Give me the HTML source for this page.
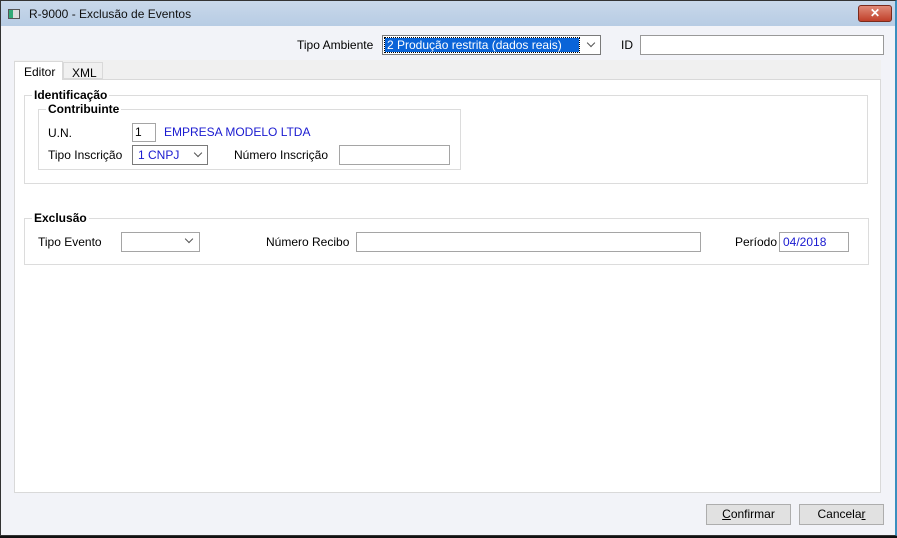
<!DOCTYPE html><html><head><style>
*{margin:0;padding:0;box-sizing:border-box}
body{width:897px;height:538px;overflow:hidden;background:#fff;font-family:"Liberation Sans",sans-serif;font-size:12px;color:#000;position:relative}
.a{position:absolute}
.win{left:0;top:0;width:897px;height:536px;background:#f2f3f8;border:1px solid #333;border-right:2px solid #3a8fbf}
.title{left:1px;top:1px;width:894px;height:25px;background:linear-gradient(#c9d8ea,#b7cce4)}
.inp{position:absolute;background:#fff;border:1px solid #a5a5a5;height:20px}
.txt{position:absolute;white-space:nowrap}
.blue{color:#1a1ad0}
.chev{position:absolute;width:6px;height:6px;border-right:1px solid #555;border-bottom:1px solid #555;transform:rotate(45deg)}
.grp{position:absolute;border:1px solid #dcdcdc}
.leg{position:absolute;background:#fff;font-weight:bold;font-size:12px;padding:0 2px}
.btn{position:absolute;background:#e1e1e1;border:1px solid #adadad;height:21px;text-align:center;line-height:19px}
</style></head><body>
<div class="a" style="left:0;top:534px;width:897px;height:4px;background:#111"></div>
<div class="a win"></div>
<div class="a title"></div>
<div class="a" style="left:8px;top:9px;width:12px;height:10px;border:1px solid #555;background:linear-gradient(90deg,#3a7 0 40%,#ddd 40%)"></div>
<div class="txt" style="left:29px;top:7px;font-size:12px;color:#111">R-9000 - Exclusão de Eventos</div>
<div class="a" style="left:858px;top:5px;width:34px;height:17px;background:linear-gradient(#e08a78,#c0402a);border:1px solid #7a2a1c;border-radius:3px;color:#fff;text-align:center;font-weight:bold;line-height:15px">✕</div>
<div class="txt" style="left:297px;top:38px">Tipo Ambiente</div>
<div class="inp" style="left:382px;top:35px;width:219px;border-color:#7a7a7a"></div>
<div class="a" style="left:385px;top:38px;width:194px;height:14px;background:#0a64d8;color:#fff;line-height:14px;padding-left:2px;outline:1px dotted #000">2 Produção restrita (dados reais)</div>
<div class="chev" style="left:588px;top:40px"></div>
<div class="txt" style="left:621px;top:38px">ID</div>
<div class="inp" style="left:640px;top:35px;width:244px;border-color:#999"></div>
<div class="a" style="left:14px;top:60px;width:867px;height:20px;background:#f0f0f0;border-bottom:1px solid #ddd"></div>
<div class="a" style="left:14px;top:61px;width:49px;height:19px;background:#fff;border:1px solid #d9d9d9;border-bottom:none;z-index:2"></div>
<div class="txt" style="left:24px;top:65px;z-index:3">Editor</div>
<div class="a" style="left:63px;top:62px;width:40px;height:17px;border:1px solid #d9d9d9;background:#f0f0f0"></div>
<div class="txt" style="left:72px;top:66px">XML</div>
<div class="a" style="left:14px;top:79px;width:867px;height:414px;background:#fff;border:1px solid #d9d9d9"></div>
<div class="grp" style="left:24px;top:95px;width:844px;height:89px"></div>
<div class="leg" style="left:32px;top:88px">Identificação</div>
<div class="grp" style="left:38px;top:109px;width:423px;height:61px"></div>
<div class="leg" style="left:46px;top:102px">Contribuinte</div>
<div class="txt" style="left:48px;top:126px">U.N.</div>
<div class="inp" style="left:132px;top:123px;width:24px;height:19px;padding-left:2px;line-height:17px">1</div>
<div class="txt blue" style="left:164px;top:125px">EMPRESA MODELO LTDA</div>
<div class="txt" style="left:48px;top:148px">Tipo Inscrição</div>
<div class="inp" style="left:132px;top:145px;width:76px;border-color:#7a7a7a;padding-left:5px;line-height:18px" ><span class="blue">1 CNPJ</span></div>
<div class="chev" style="left:195px;top:150px"></div>
<div class="txt" style="left:234px;top:148px">Número Inscrição</div>
<div class="inp" style="left:339px;top:145px;width:111px"></div>
<div class="grp" style="left:24px;top:218px;width:845px;height:47px"></div>
<div class="leg" style="left:32px;top:211px">Exclusão</div>
<div class="txt" style="left:38px;top:235px">Tipo Evento</div>
<div class="inp" style="left:121px;top:232px;width:79px"></div>
<div class="chev" style="left:186px;top:236px"></div>
<div class="txt" style="left:266px;top:235px">Número Recibo</div>
<div class="inp" style="left:356px;top:232px;width:345px"></div>
<div class="txt" style="left:735px;top:235px">Período</div>
<div class="inp" style="left:779px;top:232px;width:70px;padding-left:3px;line-height:18px"><span class="blue">04/2018</span></div>
<div class="btn" style="left:706px;top:504px;width:85px"><u>C</u>onfirmar</div>
<div class="btn" style="left:799px;top:504px;width:85px">Cancela<u>r</u></div>
</body></html>
